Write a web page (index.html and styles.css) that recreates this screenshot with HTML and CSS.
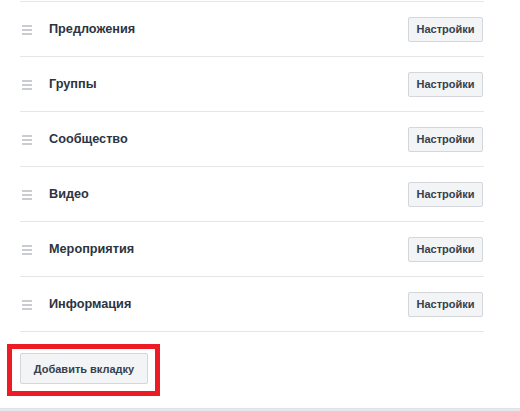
FILE: index.html
```html
<!DOCTYPE html>
<html lang="ru">
<head>
    <meta charset="UTF-8">
    <title>Вкладки</title>
    <link rel="stylesheet" href="styles.css">
</head>
<body>
    <div class="page">
        <ul class="tabs">
            <li class="tab"><span class="drag"><i></i><i></i><i></i></span><span class="tab-name">Предложения</span><button class="btn">Настройки</button></li>
            <li class="tab"><span class="drag"><i></i><i></i><i></i></span><span class="tab-name">Группы</span><button class="btn">Настройки</button></li>
            <li class="tab"><span class="drag"><i></i><i></i><i></i></span><span class="tab-name">Сообщество</span><button class="btn">Настройки</button></li>
            <li class="tab"><span class="drag"><i></i><i></i><i></i></span><span class="tab-name">Видео</span><button class="btn">Настройки</button></li>
            <li class="tab"><span class="drag"><i></i><i></i><i></i></span><span class="tab-name">Мероприятия</span><button class="btn">Настройки</button></li>
            <li class="tab"><span class="drag"><i></i><i></i><i></i></span><span class="tab-name">Информация</span><button class="btn">Настройки</button></li>
        </ul>
        <div class="highlight">
            <button class="btn btn-add">Добавить вкладку</button>
        </div>
    </div>
    <div class="footer"></div>
</body>
</html>
```

FILE: styles.css
```css
body {
    margin: 0;
    background: #fff;
    font-family: 'Liberation Sans', Arial, sans-serif;
    color: #2a3440;
}
.page {
    height: 408px;
    box-sizing: border-box;
    padding-top: 1px;
}
.tabs {
    list-style: none;
    margin: 0 36px 0 20px;
    padding: 0;
}
.tab {
    display: flex;
    align-items: center;
    height: 54px;
    border-top: 1px solid #e4e6e9;
}
.tab:last-child {
    border-bottom: 1px solid #e4e6e9;
}
.drag {
    display: flex;
    flex-direction: column;
    gap: 2px;
    width: 10px;
    margin: 0 17px 0 2px;
    padding-top: 1px;
}
.drag i {
    display: block;
    height: 2px;
    background: #c9ccd1;
}
.tab-name {
    flex: 1;
    font-size: 12.7px;
    font-weight: bold;
    color: #2b3441;
    padding-bottom: 1px;
}
.btn {
    font-family: 'Liberation Sans', Arial, sans-serif;
    font-size: 11px;
    font-weight: bold;
    color: #35404c;
    background: #f2f4f6;
    border: 1px solid #d3d6db;
    border-radius: 2px;
    height: 25px;
    width: 75px;
    padding: 0;
    margin-right: 1px;
}
.highlight {
    display: inline-block;
    margin: 12px 0 0 7px;
    padding: 4px 7px 7px 8px;
    border: 5px solid #ed1c24;
}
.btn-add {
    display: block;
    width: 128px;
    height: 31px;
    font-size: 11px;
    margin: 0;
}
.footer {
    height: 3px;
    background: #e7e8ec;
    border-top: 1px solid #e0e2e5;
}
```
